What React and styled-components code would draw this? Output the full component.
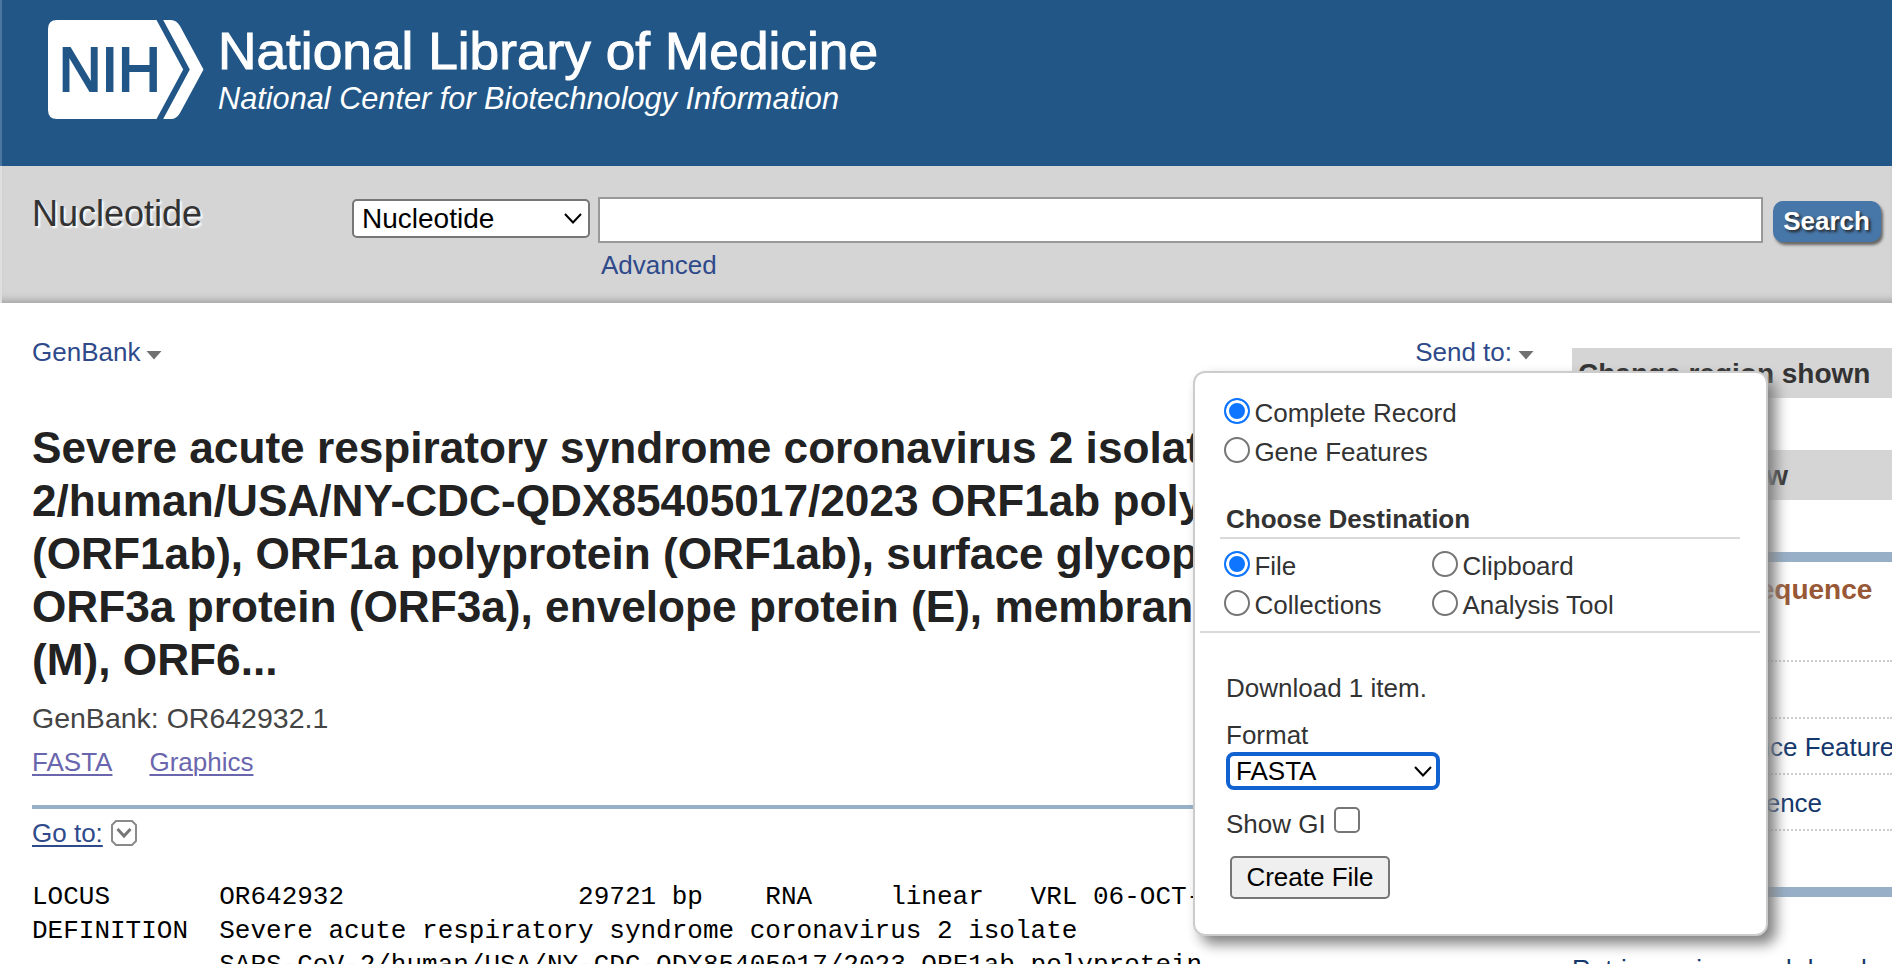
import React from "react";
import styled, { createGlobalStyle } from "styled-components";

const Global = createGlobalStyle`
  * { box-sizing: border-box; }
  html, body { margin: 0; padding: 0; background: #fff; overflow: hidden; }
  body { font-family: "Liberation Sans", Arial, sans-serif; font-size: 26px; line-height: 30px; color: #333; }
`;

const Page = styled.div`
  position: relative;
  width: 1892px;
  height: 964px;
  overflow: hidden;
`;

const Header = styled.header`
  height: 166px;
  background: #215687;
  border-left: 2px solid #4a769f;
  padding: 10px 0 0 38px;
`;

const SearchBar = styled.section`
  height: 137px;
  background: #d5d5d5;
  box-shadow: inset 0 -9px 8px -7px #999;
  border-left: 2px solid #dfdfdf;
  display: flex;
  align-items: flex-start;
  padding-left: 30px;
`;

const DbTitle = styled.h2`
  margin: 27px 0 0;
  width: 320px;
  font-size: 36px;
  line-height: 42px;
  font-weight: 400;
  color: #333;
  text-shadow: 2px 2px 2px #fff;
`;

const Select = styled.button`
  display: flex;
  align-items: center;
  justify-content: space-between;
  width: ${(p) => p.$w}px;
  height: ${(p) => p.$h}px;
  margin: ${(p) => p.$m};
  padding: ${(p) => p.$pad};
  border: ${(p) => (p.$focus ? "4px solid #0f62d0" : "2px solid #767676")};
  border-radius: ${(p) => (p.$focus ? 8 : 5)}px;
  background: #fff;
  color: #000;
  font: ${(p) => p.$size}px/30px "Liberation Sans", Arial, sans-serif;
`;

const SearchField = styled.div`
  width: 1165px;
  margin-top: 31px;
`;

const Input = styled.input`
  display: block;
  width: 100%;
  height: 46px;
  border: 2px solid #999;
  background: #fff;
  padding: 0 8px;
  outline: none;
`;

const Link = styled.a`
  color: ${(p) => p.$color || "#2f4a8b"};
  text-decoration: ${(p) => (p.$underline ? "underline" : "none")};
  text-decoration-thickness: 2px;
  text-underline-offset: 3px;
`;

const Advanced = styled.div`
  margin: 7px 0 0 3px;
`;

const SearchButton = styled.button`
  width: 108px;
  height: 41px;
  margin: 35px 0 0 10px;
  padding: 0 1px 2px 0;
  border: 0;
  border-radius: 10px;
  background: #4777a9;
  color: #fff;
  font: bold 26px/30px "Liberation Sans", Arial, sans-serif;
  text-shadow: 2px 2px 3px #222;
  box-shadow: 2px 3px 3px #666;
`;

const Main = styled.main`
  display: flex;
  padding: 0 0 0 32px;
`;

const Record = styled.article`
  width: 1502px;
  flex: none;
  padding-top: 34px;
  white-space: nowrap;
`;

const Toolbar = styled.div`
  display: flex;
  justify-content: space-between;
  height: 30px;
  margin-bottom: 54px;
`;

const MenuLink = styled.div`
  display: flex;
  align-items: flex-start;
  color: #2f4a8b;
  svg { margin: 13px 0 0 6px; }
`;

const Title = styled.h1`
  margin: 0;
  font-size: 44.2px;
  line-height: 53px;
  color: #222;
`;

const Accession = styled.p`
  margin: 16px 0 0;
  font-size: 28.5px;
  line-height: 32px;
  color: #444;
`;

const Formats = styled.div`
  display: flex;
  gap: 37px;
  margin-top: 13px;
`;

const Rule = styled.div`
  height: ${(p) => p.$h}px;
  background: #97b0c8;
  margin-top: ${(p) => p.$mt}px;
`;

const GoTo = styled.div`
  display: flex;
  align-items: flex-start;
  margin-top: 9px;
  height: 30px;
  svg { margin: 2px 0 0 8px; }
`;

const Flat = styled.pre`
  margin: 32px 0 0;
  font: 26px/34px "Liberation Mono", monospace;
  color: #000;
`;

const Sidebar = styled.aside`
  width: 320px;
  flex: none;
  margin-left: 38px;
  padding-top: 45px;
  white-space: nowrap;
`;

const Portlet = styled.h3`
  margin: 0 0 52px;
  height: 50px;
  padding: 9px 0 0 6px;
  background: #d5d5d5;
  font-size: 28px;
  line-height: 34px;
  color: #333;
`;

const SideTitle = styled.h3`
  margin: 0;
  height: 44px;
  padding-top: 11px;
  font-size: 28px;
  line-height: 34px;
  color: #985735;
`;

const SideRow = styled.div`
  height: 56.33px;
  padding-top: 13px;
  border-bottom: 2px dotted #ccc;
  color: #14376c;
`;

const Related = styled.div`
  margin-top: 57px;
  color: #14376c;
`;

const Popup = styled.form`
  position: absolute;
  left: 1193px;
  top: 371px;
  width: 575px;
  height: 565px;
  border: 2px solid #ccc;
  border-radius: 12px;
  background: #fff;
  box-shadow: 8px 8px 14px #808080;
  padding: 25px 0 0 1px;
`;

const Options = styled.div`
  display: grid;
  grid-template-columns: 208px 1fr;
  row-gap: 9px;
  padding: ${(p) => p.$pad};
`;

const Option = styled.label`
  display: flex;
  height: 30px;
  gap: 4.4px;
  white-space: nowrap;
  grid-column: ${(p) => (p.$solo ? "1 / -1" : "auto")};
`;

const Dot = styled.span`
  width: 26px;
  height: 26px;
  flex: none;
  border-radius: 50%;
  border: 2px solid ${(p) => (p.$on ? "#0d75ff" : "#767676")};
  background: ${(p) => (p.$on ? "#0d75ff" : "#fff")};
  box-shadow: inset 0 0 0 3px #fff;
`;

const Legend = styled.h4`
  margin: 34px 26px 0 24px;
  padding: 3px 0 0 6px;
  height: 38px;
  line-height: 30px;
  font-size: 26px;
  border-bottom: 2px solid #d9d9d9;
`;

const Divider = styled.div`
  margin: 11px 6px 0 4px;
  height: 2px;
  background: #d9d9d9;
`;

const Line = styled.div`
  display: flex;
  margin: ${(p) => p.$mt}px 0 0 30px;
  height: 30px;
`;

const CheckBox = styled.span`
  width: 26px;
  height: 26px;
  margin: -2px 0 0 8px;
  border: 2px solid #767676;
  border-radius: 5px;
  background: #fff;
`;

const CreateButton = styled.button`
  display: block;
  margin: 17px 0 0 34px;
  width: 160px;
  height: 43px;
  padding: 0 0 1px;
  border: 2px solid #767676;
  border-radius: 5px;
  background: #efefef;
  color: #000;
  font: 26px/30px "Liberation Sans", Arial, sans-serif;
`;

const Logo = () => (
  <svg width="860" height="120" viewBox="40 10 860 120" fontFamily="Liberation Sans, Arial, sans-serif">
    <path d="M57 20H156.500L183.200 69.500L156.500 119H57Q48 119 48 110V29Q48 20 57 20Z" fill="#fff" />
    <path d="M163.200 20H171Q176.500 20 180 26L203.500 69.500L180 113Q176.500 119 171 119H163.200L189.800 69.500Z" fill="#fff" />
    <text x="58.800" y="91.300" fontSize="63" textLength="102" lengthAdjust="spacingAndGlyphs" fill="#215687" stroke="#215687" strokeWidth="2">NIH</text>
    <text x="218" y="68.800" fontSize="51.500" textLength="660" lengthAdjust="spacingAndGlyphs" fill="#fff" stroke="#fff" strokeWidth="1">National Library of Medicine</text>
    <text x="218" y="108.500" fontSize="30.500" fontStyle="italic" textLength="621" lengthAdjust="spacingAndGlyphs" fill="#fff">National Center for Biotechnology Information</text>
  </svg>
);

const Chevron = () => (
  <svg width="18" height="11" viewBox="0 0 18 11">
    <path d="M1 1L9 9.500L17 1" fill="none" stroke="#000" strokeWidth="2" />
  </svg>
);

const Triangle = () => (
  <svg width="16" height="10" viewBox="0 0 16 10">
    <path d="M0.500 1H15.500L8 9.500Z" fill="#707070" />
  </svg>
);

const GoToIcon = () => (
  <svg width="26" height="26" viewBox="0 0 26 26">
    <path d="M5 1H21L25 5V21L21 25H5L1 21V5Z" fill="#fff" stroke="#8a8a8a" strokeWidth="2" strokeLinejoin="round" />
    <path d="M6.500 9L13 16L19.500 9" fill="none" stroke="#777" strokeWidth="3" />
  </svg>
);

const Radio = ({ on, solo, children }) => (
  <Option $solo={solo}>
    <Dot $on={on} />
    <span>{children}</span>
  </Option>
);

const flatFile = `LOCUS       OR642932               29721 bp    RNA     linear   VRL 06-OCT-2023
DEFINITION  Severe acute respiratory syndrome coronavirus 2 isolate
            SARS-CoV-2/human/USA/NY-CDC-QDX85405017/2023 ORF1ab polyprotein`;

export default function App() {
  return (
    <Page>
      <Global />
      <Header><Logo /></Header>
      <SearchBar>
        <DbTitle>Nucleotide</DbTitle>
        <Select $w={238} $h={39} $m="33px 8px 0 0" $pad="0 6px 0 8px" $size={28}>
          Nucleotide<Chevron />
        </Select>
        <SearchField>
          <Input />
          <Advanced><Link>Advanced</Link></Advanced>
        </SearchField>
        <SearchButton>Search</SearchButton>
      </SearchBar>
      <Main>
        <Record>
          <Toolbar>
            <MenuLink>GenBank<Triangle /></MenuLink>
            <MenuLink>Send to:<Triangle /></MenuLink>
          </Toolbar>
          <Title>
            Severe acute respiratory syndrome coronavirus 2 isolate<br />
            2/human/USA/NY-CDC-QDX85405017/2023 ORF1ab polyprotein<br />
            (ORF1ab), ORF1a polyprotein (ORF1ab), surface glycoprotein<br />
            ORF3a protein (ORF3a), envelope protein (E), membrane<br />
            (M), ORF6...
          </Title>
          <Accession>GenBank: OR642932.1</Accession>
          <Formats>
            <Link $underline $color="#6a66ad">FASTA</Link>
            <Link $underline $color="#6a66ad">Graphics</Link>
          </Formats>
          <Rule $h={4} $mt={28} />
          <GoTo><Link $underline>Go to:</Link><GoToIcon /></GoTo>
          <Flat>{flatFile}</Flat>
        </Record>
        <Sidebar>
          <Portlet>Change region shown</Portlet>
          <Portlet>Customize view</Portlet>
          <Rule $h={10} $mt={0} />
          <SideTitle>Analyze this sequence</SideTitle>
          <SideRow>Run BLAST</SideRow>
          <SideRow>Pick Primers</SideRow>
          <SideRow>Highlight Sequence Features</SideRow>
          <SideRow>Find in this Sequence</SideRow>
          <Rule $h={10} $mt={55.7} />
          <Related>Retrieve, view, and download</Related>
        </Sidebar>
      </Main>
      <Popup>
        <Options $pad="0 0 0 28px">
          <Radio on solo>Complete Record</Radio>
          <Radio solo>Gene Features</Radio>
        </Options>
        <Legend>Choose Destination</Legend>
        <Options $pad="12px 0 0 28px">
          <Radio on>File</Radio>
          <Radio>Clipboard</Radio>
          <Radio>Collections</Radio>
          <Radio>Analysis Tool</Radio>
        </Options>
        <Divider />
        <Line $mt={40}>Download 1 item.</Line>
        <Line $mt={17}>Format</Line>
        <Select type="button" $focus $w={214} $h={38} $m="2px 0 0 30px" $pad="0 4px 0 6px" $size={26}>
          FASTA<Chevron />
        </Select>
        <Line $mt={19}>Show GI<CheckBox /></Line>
        <CreateButton type="button">Create File</CreateButton>
      </Popup>
    </Page>
  );
}
